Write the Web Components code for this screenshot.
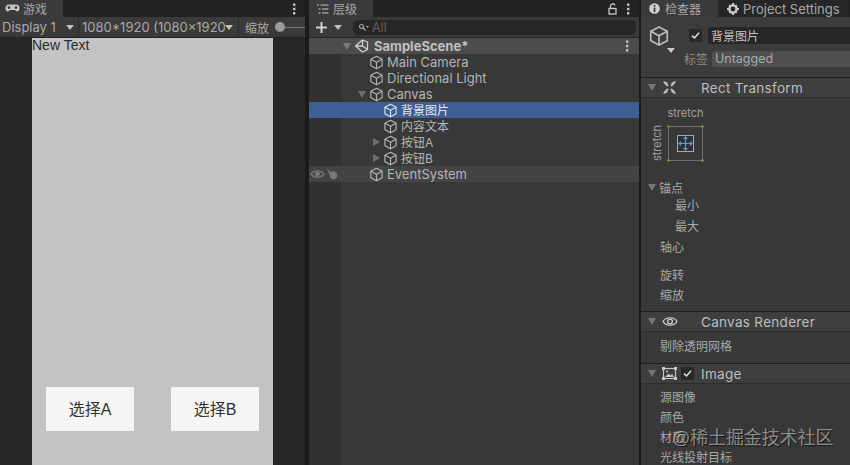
<!DOCTYPE html>
<html>
<head>
<meta charset="utf-8">
<style>
  html, body { margin: 0; padding: 0; background: #1b1b1b; }
  body {
    width: 850px; height: 465px; overflow: hidden; position: relative;
    font-family: Inter, "Noto Sans CJK SC", sans-serif;
    font-size: 13px; color: #bdbdbd;
  }
  #app { display: flex; width: 850px; height: 465px; }
</style>
</head>
<body>
<div id="app">
  <game-panel></game-panel>
  <hierarchy-panel></hierarchy-panel>
  <inspector-panel></inspector-panel>
</div>
<water-mark>@稀土掘金技术社区</water-mark>

<script>
const FONT = 'Inter, "Noto Sans CJK SC", sans-serif';
const SCREEN_FONT = '"Liberation Sans", "Noto Sans CJK SC", sans-serif';

const CUBE = (size, color) => `<svg width="${size}" height="${size}" viewBox="0 0 16 16" fill="none" stroke="${color}" stroke-width="1.2" stroke-linejoin="round" style="display:block;flex:none"><path d="M8 1.4 14 4.6V11.4L8 14.6 2 11.4V4.6Z"/><path d="M2 4.6 8 7.8 14 4.6M8 7.8V14.6"/></svg>`;
const MENU_DOTS = `<svg width="4" height="12" viewBox="0 0 4 12" fill="#c4c4c4" style="display:block"><rect x="1" y="0.5" width="2.4" height="2.4"/><rect x="1" y="4.8" width="2.4" height="2.4"/><rect x="1" y="9.1" width="2.4" height="2.4"/></svg>`;
const CHECK = `<svg width="11" height="11" viewBox="0 0 11 11" fill="none" stroke="#e2e2e2" stroke-width="1.5" style="display:block"><path d="M2 5.6 4.5 8 9 2.8"/></svg>`;

class TabBar extends HTMLElement {
  constructor() {
    super();
    const shadow = this.attachShadow({ mode: 'open' });
    shadow.innerHTML = `
      <style>
        :host { display: flex; height: 17px; background: #222; flex: none; align-items: stretch; }
        .tabs { display: flex; }
        .right { margin-left: auto; display: flex; align-items: center; gap: 9px; padding-right: 9px; }
      </style>
      <div class="tabs"><slot></slot></div>
      <div class="right"><slot name="right"></slot></div>`;
  }
}
customElements.define('tab-bar', TabBar);

class TabItem extends HTMLElement {
  constructor() {
    super();
    const shadow = this.attachShadow({ mode: 'open' });
    shadow.innerHTML = `
      <style>
        :host {
          display: flex; align-items: center; gap: 3px; box-sizing: border-box; height: 17px;
          background: #3a3a3a; color: #a8a8a8; font-size: 12px; white-space: nowrap;
        }
        :host([off]) { background: #262626; }
      </style>
      <slot name="icon"></slot><slot></slot>`;
  }
}
customElements.define('tab-item', TabItem);

class GamePanel extends HTMLElement {
  constructor() {
    super();
    const shadow = this.attachShadow({ mode: 'open' });
    shadow.innerHTML = `
      <style>
        :host { display: flex; flex-direction: column; width: 305px; height: 465px; flex: none; background: #272727; font-family: ${FONT}; }
        .bar { display: flex; align-items: center; height: 21px; background: #3a3a3a; color: #a9a9a9; font-size: 13px; flex: none; border-bottom: 1px solid #202020; box-sizing: border-box; white-space: nowrap; }
        .cell { display: flex; align-items: center; height: 100%; box-sizing: border-box; border-right: 1px solid #2a2a2a; overflow: hidden; }
        .arrow { width: 0; height: 0; border: 4px solid transparent; border-top: 5px solid #c2c2c2; border-bottom: 0; flex: none; }
        .view { flex: 1; display: flex; padding-left: 32px; padding-right: 32px; min-height: 0; }
        .screen { width: 241px; background: #c3c3c3; position: relative; color: #2c2c2c; display: flex; flex-direction: column; font-family: ${SCREEN_FONT}; }
        .new { font-size: 14px; line-height: 15px; height: 15px; }
        .btns { margin-top: auto; margin-bottom: 34px; display: flex; justify-content: space-between; padding: 0 14px; }
        .btn { width: 88px; height: 44px; box-sizing: border-box; padding-bottom: 3px; background: #f5f5f5; display: flex; align-items: center; justify-content: center; font-size: 16px; color: #323232; }
        .sl { display: flex; align-items: center; margin-left: 6px; }
        .knob { width: 10px; height: 10px; border-radius: 50%; background: #9a9a9a; }
        .rail { width: 20px; height: 1px; background: #7c7c7c; }
      </style>
      <tab-bar>
        <tab-item style="width:63px;padding-left:5px">
          <svg slot="icon" width="15" height="9" viewBox="0 0 15 9"><path d="M4 .5h7a3.6 3.6 0 0 1 3.5 4.3c-.3 2.6-2.4 3.4-3.7 2L9.8 6H5.2l-1 .8C2.900 8.200.8 7.400.5 4.800A3.600 3.600 0 0 1 4 .5Z" fill="#c4c4c4"/><circle cx="4" cy="3.600" r="1.300" fill="#3a3a3a"/><circle cx="11" cy="3.600" r="1.300" fill="#3a3a3a"/></svg>
          游戏
        </tab-item>
        <span slot="right">${MENU_DOTS}</span>
      </tab-bar>
      <div class="bar">
        <div class="cell" style="width:79px;padding-left:2px;justify-content:space-between;padding-right:4px">Display 1<span class="arrow"></span></div>
        <div class="cell" style="width:160px;padding-left:3px"><span style="width:143px;overflow:hidden">1080*1920 (1080x1920)</span><span class="arrow"></span></div>
        <div class="cell" style="border:0;padding-left:6px;font-size:12px">缩放<span class="sl"><span class="knob"></span><span class="rail"></span></span></div>
      </div>
      <div class="view">
        <div class="screen">
          <div class="new">New Text</div>
          <div class="btns"><div class="btn">选择A</div><div class="btn">选择B</div></div>
        </div>
      </div>`;
  }
}
customElements.define('game-panel', GamePanel);

class TreeRow extends HTMLElement {
  constructor() {
    super();
    const shadow = this.attachShadow({ mode: 'open' });
    const depth = +this.getAttribute('depth') || 0;
    const arrow = this.getAttribute('arrow');
    const sel = this.hasAttribute('selected');
    const tri = arrow === 'down'
      ? '<span class="tri down"></span>'
      : arrow === 'right' ? '<span class="tri right"></span>' : '';
    shadow.innerHTML = `
      <style>
        :host { display: flex; height: 16px; align-items: center; font-size: 13px; color: #b4b4b4; white-space: nowrap; position: relative; }
        :host([selected]) { background: #3d5f93; color: #e4e8ee; }
        :host([hot]) { background: #444; }
        :host([cjk]) .name { font-size: 12px; padding-bottom: 2px; }
        .gut { width: 32px; flex: none; display: flex; align-items: center; height: 100%; padding-left: 1px; box-sizing: border-box; gap: 1px; }
        .ar { width: 14px; flex: none; display: flex; align-items: center; justify-content: center; }
        .tri { width: 0; height: 0; border-style: solid; border-color: transparent; display: block; }
        .tri.down { border-width: 7px 4.500px 0; border-top-color: #6d6d6d; }
        .tri.right { border-width: 4.500px 0 4.500px 7px; border-left-color: #6d6d6d; }
        .name { margin-left: 3px; }
      </style>
      <div class="gut"><slot name="gutter"></slot></div>
      <div style="width:${depth * 14 + 14}px;flex:none;display:flex;justify-content:flex-end"><div class="ar">${tri}</div></div>
      ${CUBE(15, sel ? '#d8e2ee' : '#b4b4b4')}
      <span class="name"><slot></slot></span>`;
  }
}
customElements.define('tree-row', TreeRow);

class HierarchyPanel extends HTMLElement {
  constructor() {
    super();
    const shadow = this.attachShadow({ mode: 'open' });
    shadow.innerHTML = `
      <style>
        :host { display: flex; flex-direction: column; width: 330px; height: 465px; flex: none; margin-left: 4px; background: #383838; font-family: ${FONT}; position: relative; }
        .gutter { position: absolute; left: 0; top: 38px; bottom: 0; width: 32px; background: #313131; }
        .bar { display: flex; align-items: center; height: 21px; background: #3a3a3a; flex: none; box-sizing: border-box; padding-left: 6px; gap: 3px; border-bottom: 1px solid #222; }
        .search { flex: 1; height: 15px; background: #262626; border-radius: 5px; margin: 0 3px 0 8px; display: flex; align-items: center; padding-left: 5px; color: #5f5f5f; font-size: 12.500px; gap: 3px; }
        .arrow { width: 0; height: 0; border: 3.500px solid transparent; border-top: 4.500px solid #bdbdbd; border-bottom: 0; }
        .scene { display: flex; align-items: center; height: 16px; background: #4c4c4c; color: #c0c0c0; font-weight: bold; font-size: 13px; position: relative; }
        .tri { width: 0; height: 0; border-style: solid; border-color: transparent; border-width: 7px 4.500px 0; border-top-color: #7b7b7b; margin-left: 34px; }
        .rows { position: relative; display: flex; flex-direction: column; }
      </style>
      <div class="gutter"></div>
      <tab-bar>
        <tab-item style="width:64px;padding-left:8px">
          <svg slot="icon" width="12" height="10" viewBox="0 0 12 10" fill="#b0b0b0"><rect x="0" y="0.500" width="2" height="1.200"/><rect x="3.500" y="0.500" width="8" height="1.200"/><rect x="1.500" y="4.400" width="2" height="1.200"/><rect x="5" y="4.400" width="6.500" height="1.200"/><rect x="1.500" y="8.300" width="2" height="1.200"/><rect x="5" y="8.300" width="6.500" height="1.200"/></svg>
          <span style="margin-left:1px">层级</span>
        </tab-item>
        <svg slot="right" width="9" height="12" viewBox="0 0 9 12" fill="none" stroke="#c8c8c8" stroke-width="1.300" style="display:block"><path d="M2.500 5V3a2.300 2.300 0 0 1 4.500-.6"/><rect x="1" y="5.500" width="7" height="5.500" fill="none"/></svg>
        <span slot="right">${MENU_DOTS}</span>
      </tab-bar>
      <div class="bar">
        <svg width="13" height="13" viewBox="0 0 13 13" stroke="#d0d0d0" stroke-width="2" style="display:block"><path d="M6.500 1V12M1 6.500H12"/></svg>
        <span class="arrow" style="margin-left:3px;border-width:4px;border-top-width:5px;border-bottom:0"></span>
        <div class="search">
          <svg width="11" height="9" viewBox="0 0 11 9" fill="none" stroke="#a4a4a4" stroke-width="1.200"><circle cx="3.500" cy="3.500" r="2"/><path d="M5 5 7.500 7.500"/><path d="M8 3h3L9.500 5Z" fill="#a4a4a4" stroke="none"/></svg>
          All
        </div>
      </div>
      <div class="rows">
        <div class="scene">
          <span class="tri"></span>
          <svg width="15" height="14" viewBox="0 0 15 14" fill="none" stroke="#d0d0d0" stroke-width="1.300" stroke-linejoin="round" style="margin-left:3px;flex:none"><path d="M8.500 1 13.500 3V10.500L8.500 13 1.500 7Z"/><path d="M1.500 7H8.500L8.500 1M8.500 7 13.500 10.500"/></svg>
          <span style="margin-left:5px">SampleScene*</span>
          <span style="position:absolute;right:10px;top:2px">${MENU_DOTS}</span>
        </div>
        <tree-row depth="1">Main Camera</tree-row>
        <tree-row depth="1">Directional Light</tree-row>
        <tree-row depth="1" arrow="down">Canvas</tree-row>
        <tree-row depth="2" selected cjk>背景图片</tree-row>
        <tree-row depth="2" cjk>内容文本</tree-row>
        <tree-row depth="2" arrow="right" cjk>按钮A</tree-row>
        <tree-row depth="2" arrow="right" cjk>按钮B</tree-row>
        <tree-row depth="1" hot>
          <svg slot="gutter" width="15" height="10" viewBox="0 0 15 10" fill="none" stroke="#787878" stroke-width="1.300"><path d="M1 5C4 .8 11 .8 14 5 11 9.200 4 9.200 1 5Z"/><circle cx="7.500" cy="5" r="1.800" fill="#787878"/></svg>
          <svg slot="gutter" width="12" height="12" viewBox="0 0 12 12" fill="#787878"><path d="M1 1 5 4 7 3 11 5 11 9 8.500 11.500 5 11 3.500 6.500Z"/></svg>
          EventSystem
        </tree-row>
      </div>`;
  }
}
customElements.define('hierarchy-panel', HierarchyPanel);

class CompHeader extends HTMLElement {
  constructor() {
    super();
    const shadow = this.attachShadow({ mode: 'open' });
    shadow.innerHTML = `
      <style>
        :host { display: flex; align-items: center; height: 21px; box-sizing: border-box; background: #3e3e3e; border-top: 1px solid #1e1e1e; border-bottom: 1px solid #2d2d2d; color: #bdbdbd; font-size: 13.500px; letter-spacing: .3px; flex: none; white-space: nowrap; }
        .tri { width: 0; height: 0; border-style: solid; border-color: transparent; border-width: 7px 4.500px 0; border-top-color: #767676; margin-left: 7px; flex: none; }
        .ic { width: 17px; margin-left: 5px; display: flex; justify-content: center; flex: none; }
      </style>
      <span class="tri"></span>
      <span class="ic"><slot name="icon"></slot></span>
      <slot name="check"></slot>
      <span class="name" style="margin-left:${this.getAttribute('gap') || 23}px"><slot></slot></span>`;
  }
}
customElements.define('comp-header', CompHeader);

class PropRow extends HTMLElement {
  constructor() {
    super();
    const shadow = this.attachShadow({ mode: 'open' });
    shadow.innerHTML = `
      <style>
        :host { display: flex; align-items: center; height: 20px; box-sizing: border-box; padding-bottom: 2px; font-size: 12px; color: #a8a8a8; padding-left: 19px; flex: none; white-space: nowrap; }
        :host([sub]) { padding-left: 34px; }
      </style>
      <slot></slot>`;
  }
}
customElements.define('prop-row', PropRow);

class InspectorPanel extends HTMLElement {
  constructor() {
    super();
    const shadow = this.attachShadow({ mode: 'open' });
    shadow.innerHTML = `
      <style>
        :host { display: flex; flex-direction: column; width: 209px; height: 465px; flex: none; margin-left: 2px; background: #383838; font-family: ${FONT}; position: relative; overflow: hidden; }
        .head { height: 60px; flex: none; position: relative; background: #3c3c3c; box-sizing: border-box; padding-top: 4px; }
        .top { display: flex; align-items: center; height: 29px; padding-left: 7px; }
        .chk { width: 13px; height: 13px; background: #282828; display: flex; align-items: center; justify-content: center; flex: none; border-radius: 1px; }
        .namebox { flex: 1; height: 17px; background: #262626; margin-left: 6px; color: #c4c4c4; font-size: 12px; display: flex; align-items: center; padding-left: 3px; border-radius: 3px 0 0 3px; }
        .tagrow { display: flex; align-items: center; height: 17px; padding-left: 43px; font-size: 12px; color: #8d8d8d; gap: 4px; }
        .tagbox { flex: 1; height: 16px; background: #4f4f4f; color: #a9a9a9; font-size: 12.500px; display: flex; align-items: center; padding-left: 3px; border-radius: 3px 0 0 3px; }
        .rect { height: 71px; display: grid; grid-template-columns: 21px 35px; grid-template-rows: 20px 35px; row-gap: 3px; padding-left: 6px; padding-top: 5px; flex: none; }
        .st { font-size: 11px; color: #a0a0a0; }
        .st.h { grid-column: 2; align-self: center; justify-self: center; }
        .st.v { writing-mode: vertical-rl; transform: rotate(180deg); align-self: center; justify-self: end; margin-right: 4px; }
        .anchor { grid-column: 2; grid-row: 2; width: 35px; height: 35px; overflow: visible; }
        .fold { display: flex; align-items: center; height: 20px; font-size: 12px; color: #a8a8a8; padding-left: 7px; gap: 3px; flex: none; }
        .tri { width: 0; height: 0; border-style: solid; border-color: transparent; border-width: 7px 4.500px 0; border-top-color: #767676; }
      </style>
      <tab-bar>
        <tab-item style="width:77px;padding-left:8px">
          <svg slot="icon" width="11" height="11" viewBox="0 0 11 11" style="display:block"><circle cx="5.500" cy="5.500" r="5.300" fill="#cfcfcf"/><rect x="4.600" y="4.500" width="1.800" height="4.500" fill="#3a3a3a"/><rect x="4.600" y="2" width="1.800" height="1.700" fill="#3a3a3a"/></svg>
          <span style="margin-left:2px">检查器</span>
        </tab-item>
        <tab-item off style="padding-left:9px;padding-right:7px;font-size:13px;flex:1">
          <svg slot="icon" width="12" height="12" viewBox="0 0 12 12" style="display:block"><circle cx="6" cy="6" r="3.600" fill="none" stroke="#c8c8c8" stroke-width="2.400"/><path d="M5 0h2v2.500H5ZM5 9.500h2V12H5ZM0 5h2.500v2H0ZM9.500 5H12v2H9.500ZM1.500 2.900 2.900 1.500 4.500 3.100 3.100 4.500ZM7.500 8.900 8.900 7.500 10.500 9.100 9.100 10.500ZM9.100 1.500 10.500 2.900 8.900 4.500 7.500 3.100ZM3.100 7.500 4.500 8.900 2.900 10.500 1.500 9.100Z" fill="#c8c8c8"/></svg>
          <span style="margin-left:1px">Project Settings</span>
        </tab-item>
      </tab-bar>
      <div class="head">
        <div class="top">
          ${CUBE(22, '#bdbdbd')}
          <span class="chk" style="margin-left:19px">${CHECK}</span>
          <div class="namebox">背景图片</div>
        </div>
        <svg width="8" height="5" viewBox="0 0 8 5" fill="#c8c8c8" style="position:absolute;left:26px;top:31px"><path d="M0 0H8L4 5Z"/></svg>
        <div class="tagrow">标签<div class="tagbox">Untagged</div></div>
      </div>
      <comp-header>
        <svg slot="icon" width="13" height="13" viewBox="0 0 13 13" fill="#bdbdbd"><path d="M0 1 1 0 5 2 3.500 3.500ZM13 1 12 0 8 2 9.500 3.500ZM0 12 1 13 5 11 3.500 9.500ZM13 12 12 13 8 11 9.500 9.500Z"/><path d="M1.500 1.500 5 5M11.500 1.500 8 5M1.500 11.500 5 8M11.500 11.500 8 8" stroke="#bdbdbd" stroke-width="1.800"/></svg>
        Rect Transform
      </comp-header>
      <div class="rect">
        <span class="st h" style="grid-row:1">stretch</span>
        <span class="st v" style="grid-row:2">stretch</span>
        <svg class="anchor" viewBox="0 0 35 35">
          <rect x="0.500" y="0.500" width="34" height="34" fill="none" stroke="#6e6e6e"/>
          <rect x="9.500" y="9.500" width="16" height="16" fill="#2f3036" stroke="#a8a8a8"/>
          <path d="M17.500 12V23M12 17.500H23" stroke="#5b9bd0" stroke-width="1.200"/>
          <path d="M17.500 10l2.500 3h-5ZM17.500 25l2.500-3h-5ZM10 17.500l3-2.500v5ZM25 17.500l-3-2.500v5Z" fill="#5b9bd0"/>
          <g fill="#a39a3c"><rect x="-0.500" y="-0.500" width="2" height="2"/><rect x="33.500" y="-0.500" width="2" height="2" fill="#c89a3c"/><rect x="-0.500" y="33.500" width="2" height="2"/><rect x="33.500" y="33.500" width="2" height="2" fill="#c89a3c"/></g>
        </svg>
      </div>
      <div class="fold" style="margin-top:3px"><span class="tri"></span>锚点</div>
      <prop-row sub style="height:16px">最小</prop-row>
      <prop-row sub style="height:26px">最大</prop-row>
      <prop-row style="height:16px">轴心</prop-row>
      <prop-row style="margin-top:10px">旋转</prop-row>
      <prop-row>缩放</prop-row>
      <div style="height:6px;flex:none"></div>
      <comp-header gap="23">
        <svg slot="icon" width="16" height="11" viewBox="0 0 16 11" fill="none" stroke="#d4d4d4" stroke-width="1.200"><path d="M1 5.500C4 .5 12 .5 15 5.500 12 10.500 4 10.500 1 5.500Z"/><circle cx="8" cy="5.500" r="2.400"/></svg>
        Canvas Renderer
      </comp-header>
      <prop-row style="height:28px">剔除透明网格</prop-row>
      <div style="height:3px;flex:none"></div>
      <comp-header gap="7">
        <svg slot="icon" width="15" height="13" viewBox="0 0 15 13" fill="none" stroke="#c8c8c8" stroke-width="1.100"><rect x="1.500" y="1.500" width="12" height="10"/><path d="M3 10 6.500 6.500 8.500 8.500 10 7 12 10Z" fill="#c8c8c8" stroke="none"/><circle cx="5" cy="4.500" r="1" fill="#c8c8c8" stroke="none"/><g fill="#c8c8c8" stroke="none"><rect width="3" height="3"/><rect x="12" width="3" height="3"/><rect y="10" width="3" height="3"/><rect x="12" y="10" width="3" height="3"/></g></svg>
        <span slot="check" class="chk" style="margin-left:3px;width:13px;height:13px;background:#282828;display:flex;align-items:center;justify-content:center">${CHECK}</span>
        Image
      </comp-header>
      <prop-row style="margin-top:3px">源图像</prop-row>
      <prop-row>颜色</prop-row>
      <prop-row>材质</prop-row>
      <prop-row>光线投射目标</prop-row>`;
  }
}
customElements.define('inspector-panel', InspectorPanel);

class WaterMark extends HTMLElement {
  constructor() {
    super();
    const shadow = this.attachShadow({ mode: 'open' });
    shadow.innerHTML = `
      <style>
        :host { display: block; position: absolute; left: 672px; top: 427px; font-family: ${SCREEN_FONT}; font-size: 18px; line-height: 22px; letter-spacing: -.1px; color: rgba(205,205,205,.62); text-shadow: 1px 1px 1px rgba(0,0,0,.65); white-space: nowrap; }
      </style>
      <slot></slot>`;
  }
}
customElements.define('water-mark', WaterMark);
</script>
</body>
</html>
